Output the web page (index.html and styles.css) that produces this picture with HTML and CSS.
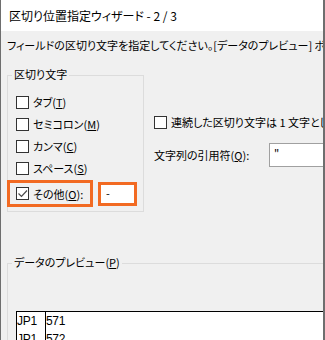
FILE: index.html
```html
<!DOCTYPE html>
<html lang="ja">
<head>
    <meta charset="UTF-8">
    <title>区切り位置指定ウィザード - 2 / 3</title>
    <link rel="stylesheet" href="styles.css">
</head>
<body>

    <div class="window">
        <div class="title-bar">区切り位置指定ウィザード - 2 / 3</div>

        <div class="instruction">フィールドの区切り文字を指定してください。[データのプレビュー] ボックスには区切り位置が表示されます。</div>

        <div class="options">
            <div class="group delimiters">
                <div class="group-label">区切り文字</div>
                <div class="option-list">
                    <div class="option"><span class="check"></span><span class="text">タブ(<u>T</u>)</span></div>
                    <div class="option"><span class="check"></span><span class="text">セミコロン(<u>M</u>)</span></div>
                    <div class="option"><span class="check"></span><span class="text">カンマ(<u>C</u>)</span></div>
                    <div class="option"><span class="check"></span><span class="text">スペース(<u>S</u>)</span></div>
                    <div class="other-row">
                        <div class="option highlight">
                            <span class="check checked">
                                <svg width="11" height="11" viewBox="0 0 11 11"><polyline points="1.5,5.5 4.5,8.5 10,2.5" fill="none" stroke="#4a4a4a" stroke-width="1.2"/></svg>
                            </span>
                            <span class="text">その他(<u>O</u>):</span>
                        </div>
                        <div class="other-input">-</div>
                    </div>
                </div>
            </div>

            <div class="side">
                <div class="option consecutive"><span class="check"></span><span class="text">連続した区切り文字は 1 文字として扱う(<u>R</u>)</span></div>
                <div class="quote-row">
                    <span class="quote-label">文字列の引用符(<u>Q</u>):</span>
                    <div class="combo">"</div>
                </div>
            </div>
        </div>

        <div class="group preview">
            <div class="group-label">データのプレビュー(<u>P</u>)</div>
            <div class="preview-box">
                <div class="cell first">JP1</div><div class="cell">571</div>
                <div class="cell first">JP1</div><div class="cell">572</div>
            </div>
        </div>
    </div>

</body>
</html>
```

FILE: styles.css
```css
body {
    margin: 0;
    padding: 0;
    font-family: "Noto Sans CJK JP", sans-serif;
    font-size: 11px;
    font-feature-settings: "palt";
    color: #000;
}

.window {
    width: 325px;
    height: 340px;
    box-sizing: border-box;
    border-left: 1px solid #6e6e6e;
    border-right: 2px solid #6e6e6e;
    background-color: #f0f0f0;
    overflow: hidden;
}

.title-bar {
    height: 31px;
    line-height: 31px;
    padding-left: 8px;
    background-color: #fff;
    font-size: 12px;
    white-space: nowrap;
}

.instruction {
    margin-top: 6px;
    padding-left: 6px;
    line-height: 16px;
    white-space: nowrap;
}

/* group boxes */
.group {
    border: 1px solid #dcdcdc;
}

.group-label {
    width: fit-content;
    margin: -10px 0 0 4px;
    padding: 0 2px;
    line-height: 16px;
    background-color: #f0f0f0;
    white-space: nowrap;
}

.options {
    display: flex;
    margin-top: 22px;
}

.delimiters {
    flex-shrink: 0;
    width: 137px;
    box-sizing: border-box;
    margin-left: 6px;
    padding-bottom: 4px;
}

.option-list {
    margin-top: 9px;
}

.option {
    display: flex;
    align-items: center;
    height: 22px;
    padding-left: 8px;
    white-space: nowrap;
}

.check {
    width: 13px;
    height: 13px;
    box-sizing: border-box;
    border: 1px solid #333;
    background-color: #fff;
    flex-shrink: 0;
    display: flex;
    align-items: center;
    justify-content: center;
}

.text {
    margin-left: 4px;
    line-height: 16px;
}

.other-row {
    display: flex;
    align-items: center;
    margin-top: 1px;
}

.highlight {
    width: 86px;
    height: 27px;
    box-sizing: border-box;
    margin-left: -1px;
    padding-left: 6px;
    border: 3px solid #f26a22;
}

.other-input {
    width: 39px;
    height: 24px;
    box-sizing: border-box;
    margin-left: 5px;
    padding-left: 5px;
    border: 3px solid #f26a22;
    background-color: #fff;
    line-height: 17px;
}

/* right side options */
.side {
    flex: 1;
    padding-left: 10px;
    min-width: 0;
}

.consecutive {
    padding-left: 0;
    margin-top: 36px;
}

.quote-row {
    display: flex;
    align-items: center;
    height: 24px;
    margin-top: 10px;
}

.quote-label {
    width: 115px;
    flex-shrink: 0;
    white-space: nowrap;
    line-height: 16px;
}

.combo {
    width: 70px;
    height: 24px;
    box-sizing: border-box;
    flex-shrink: 0;
    padding-left: 4px;
    border: 1px solid #a0a0a0;
    background-color: #fff;
    line-height: 20px;
}

/* preview */
.preview {
    width: 340px;
    margin: 51px 0 0 6px;
}

.preview-box {
    display: grid;
    grid-template-columns: 29px 1fr;
    margin: 41px 0 0 8px;
    border-top: 1px solid #000;
    border-left: 1px solid #000;
    background-color: #fff;
    font-family: "Liberation Sans", sans-serif;
    font-size: 12px;
    letter-spacing: -0.3px;
}

.cell {
    height: 18px;
    line-height: 18px;
}

.cell.first {
    border-right: 1px solid #000;
}
```
